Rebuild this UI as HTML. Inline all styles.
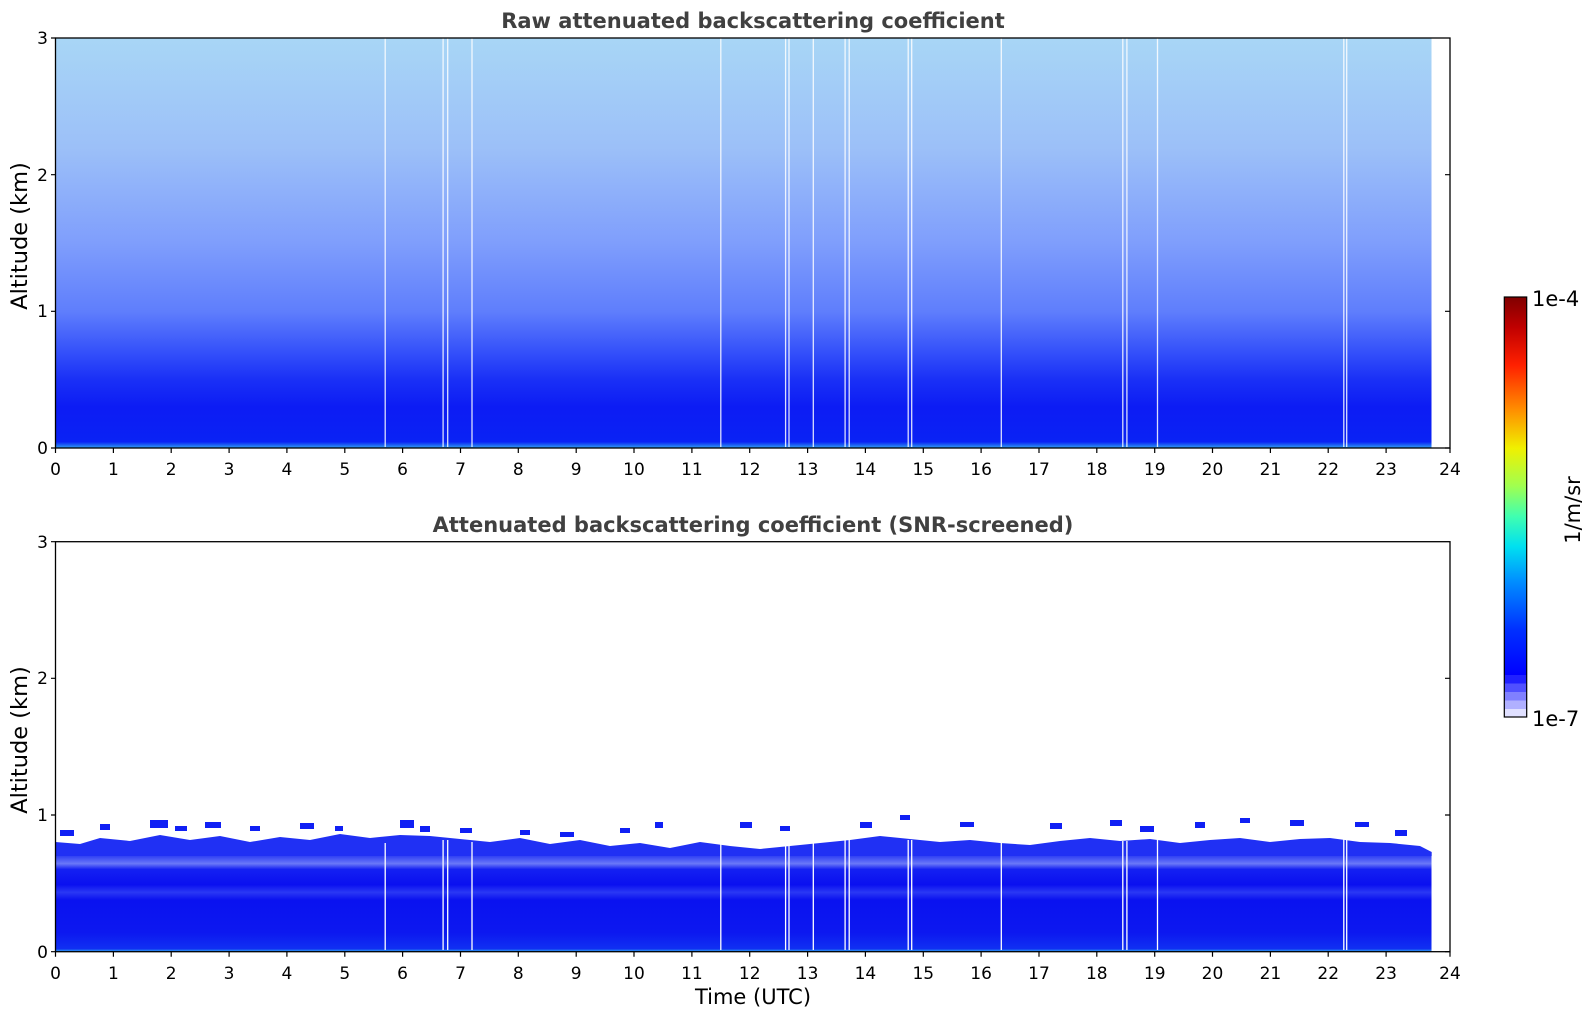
<!DOCTYPE html>
<html><head><meta charset="utf-8"><style>
html,body{margin:0;padding:0;background:#fff;}
svg{display:block;font-family:"DejaVu Sans","Liberation Sans",sans-serif;}
</style></head><body>
<svg width="1595" height="1020" viewBox="0 0 1595 1020" xmlns="http://www.w3.org/2000/svg">
<defs>
<linearGradient id="topg" x1="0" y1="0" x2="0" y2="1">
<stop offset="0" stop-color="#a8d6f6"/>
<stop offset="0.267" stop-color="#9cc0f8"/>
<stop offset="0.5" stop-color="#7f9efc"/>
<stop offset="0.667" stop-color="#5f7efc"/>
<stop offset="0.767" stop-color="#3450fa"/>
<stop offset="0.833" stop-color="#1a30f6"/>
<stop offset="0.9" stop-color="#0c1cf4"/>
<stop offset="0.985" stop-color="#0a22f4"/>
<stop offset="1" stop-color="#30a0f0"/>
</linearGradient>
<linearGradient id="botg" x1="0" y1="0" x2="0" y2="1">
<stop offset="0" stop-color="#3040f4"/>
<stop offset="0.08" stop-color="#6a78f8"/>
<stop offset="0.14" stop-color="#1420f2"/>
<stop offset="0.3" stop-color="#0a10f0"/>
<stop offset="0.38" stop-color="#2a38f4"/>
<stop offset="0.46" stop-color="#0a12f0"/>
<stop offset="0.8" stop-color="#0c18f0"/>
<stop offset="0.97" stop-color="#1030f2"/>
<stop offset="1" stop-color="#30b0f0"/>
</linearGradient>
<linearGradient id="cbar" x1="0" y1="1" x2="0" y2="0">
<stop offset="0" stop-color="#0000ff"/>
<stop offset="0.12" stop-color="#0030ff"/>
<stop offset="0.25" stop-color="#0090ff"/>
<stop offset="0.34" stop-color="#00e0f0"/>
<stop offset="0.42" stop-color="#40ffb0"/>
<stop offset="0.5" stop-color="#a0ff50"/>
<stop offset="0.6" stop-color="#f0f000"/>
<stop offset="0.7" stop-color="#ff9000"/>
<stop offset="0.82" stop-color="#ff2000"/>
<stop offset="0.92" stop-color="#c00000"/>
<stop offset="1" stop-color="#800000"/>
</linearGradient>
</defs>

<text x="753" y="28" font-size="21" font-weight="bold" fill="#404040" text-anchor="middle">Raw attenuated backscattering coefficient</text>
<text x="753" y="532" font-size="21" font-weight="bold" fill="#404040" text-anchor="middle">Attenuated backscattering coefficient (SNR-screened)</text>

<rect x="55.5" y="38" width="1376" height="410" fill="url(#topg)"/>
<g stroke="#fff" stroke-width="1.3" opacity="0.85">
<line x1="385.2" y1="38" x2="385.2" y2="447"/>
<line x1="443.1" y1="38" x2="443.1" y2="447"/>
<line x1="447.7" y1="38" x2="447.7" y2="447"/>
<line x1="472" y1="38" x2="472" y2="447"/>
<line x1="720.8" y1="38" x2="720.8" y2="447"/>
<line x1="785.6" y1="38" x2="785.6" y2="447"/>
<line x1="789" y1="38" x2="789" y2="447"/>
<line x1="813.3" y1="38" x2="813.3" y2="447"/>
<line x1="845.1" y1="38" x2="845.1" y2="447"/>
<line x1="849.2" y1="38" x2="849.2" y2="447"/>
<line x1="908.2" y1="38" x2="908.2" y2="447"/>
<line x1="911.7" y1="38" x2="911.7" y2="447"/>
<line x1="1001.3" y1="38" x2="1001.3" y2="447"/>
<line x1="1122.8" y1="38" x2="1122.8" y2="447"/>
<line x1="1126.9" y1="38" x2="1126.9" y2="447"/>
<line x1="1157.5" y1="38" x2="1157.5" y2="447"/>
<line x1="1343.8" y1="38" x2="1343.8" y2="447"/>
<line x1="1346.7" y1="38" x2="1346.7" y2="447"/>
</g>

<g>
<rect x="55.5" y="856" width="1376" height="95.7" fill="url(#botg)"/>
<path fill="#2030f4" d="M55.5 856 L55.5 842 L80 844 L100 838 L130 841 L160 835 L190 840 L220 836 L250 842 L280 837 L310 840 L340 834 L370 838 L400 835 L430 836 L460 839 L490 842 L520 838 L550 844 L580 840 L610 846 L640 843 L670 848 L700 842 L730 846 L760 849 L790 846 L820 843 L850 840 L880 836 L910 839 L940 842 L970 840 L1000 843 L1030 845 L1060 841 L1090 838 L1120 841 L1150 839 L1180 843 L1210 840 L1240 838 L1270 842 L1300 839 L1330 838 L1360 842 L1390 843 L1420 846 L1431.7 852 L1431.7 856 Z"/>
<g fill="#1020f4">
<rect x="60" y="830" width="14" height="6"/><rect x="100" y="824" width="10" height="6"/><rect x="150" y="820" width="18" height="8"/><rect x="175" y="826" width="12" height="5"/><rect x="205" y="822" width="16" height="6"/><rect x="250" y="826" width="10" height="5"/><rect x="300" y="823" width="14" height="6"/><rect x="335" y="826" width="8" height="5"/><rect x="400" y="820" width="14" height="8"/><rect x="420" y="826" width="10" height="6"/><rect x="460" y="828" width="12" height="5"/><rect x="520" y="830" width="10" height="5"/><rect x="560" y="832" width="14" height="5"/><rect x="620" y="828" width="10" height="5"/><rect x="655" y="822" width="8" height="6"/><rect x="740" y="822" width="12" height="6"/><rect x="780" y="826" width="10" height="5"/><rect x="860" y="822" width="12" height="6"/><rect x="900" y="815" width="10" height="5"/><rect x="960" y="822" width="14" height="5"/><rect x="1050" y="823" width="12" height="6"/><rect x="1110" y="820" width="12" height="6"/><rect x="1140" y="826" width="14" height="6"/><rect x="1195" y="822" width="10" height="6"/><rect x="1240" y="818" width="10" height="5"/><rect x="1290" y="820" width="14" height="6"/><rect x="1355" y="822" width="14" height="5"/><rect x="1395" y="830" width="12" height="6"/>
</g>
</g>
<g stroke="#fff" stroke-width="1.3">
<line x1="385.2" y1="843" x2="385.2" y2="950"/>
<line x1="443.1" y1="840" x2="443.1" y2="950"/>
<line x1="447.7" y1="840" x2="447.7" y2="950"/>
<line x1="472" y1="842" x2="472" y2="950"/>
<line x1="720.8" y1="842" x2="720.8" y2="950"/>
<line x1="785.6" y1="845" x2="785.6" y2="950"/>
<line x1="789" y1="845" x2="789" y2="950"/>
<line x1="813.3" y1="843" x2="813.3" y2="950"/>
<line x1="845.1" y1="840" x2="845.1" y2="950"/>
<line x1="849.2" y1="840" x2="849.2" y2="950"/>
<line x1="908.2" y1="840" x2="908.2" y2="950"/>
<line x1="911.7" y1="840" x2="911.7" y2="950"/>
<line x1="1001.3" y1="843" x2="1001.3" y2="950"/>
<line x1="1122.8" y1="841" x2="1122.8" y2="950"/>
<line x1="1126.9" y1="841" x2="1126.9" y2="950"/>
<line x1="1157.5" y1="839" x2="1157.5" y2="950"/>
<line x1="1343.8" y1="838" x2="1343.8" y2="950"/>
<line x1="1346.7" y1="838" x2="1346.7" y2="950"/>
</g>

<g fill="none" stroke="#000" stroke-width="1.3">
<rect x="55.5" y="38" width="1394.5" height="410"/>
<rect x="55.5" y="541.7" width="1394.5" height="410"/>
</g>

<g stroke="#000" stroke-width="1.2">
<path d="M51 448H55.5 M51 311.3H55.5 M51 174.7H55.5 M51 38H55.5 M1450 448H1445 M1450 311.3H1445 M1450 174.7H1445"/>
<path d="M51 951.7H55.5 M51 815H55.5 M51 678.3H55.5 M51 541.7H55.5 M1450 951.7H1445 M1450 815H1445 M1450 678.3H1445"/>
<path d="M55.5 448v5 M113.4 448v5 M171.2 448v5 M229.1 448v5 M286.9 448v5 M344.8 448v5 M402.6 448v5 M460.5 448v5 M518.3 448v5 M576.2 448v5 M634 448v5 M691.9 448v5 M749.7 448v5 M807.6 448v5 M865.4 448v5 M923.3 448v5 M981.1 448v5 M1039 448v5 M1096.8 448v5 M1154.7 448v5 M1212.5 448v5 M1270.4 448v5 M1328.2 448v5 M1386.1 448v5 M1450 448v5"/>
<path d="M55.5 951.7v5 M113.4 951.7v5 M171.2 951.7v5 M229.1 951.7v5 M286.9 951.7v5 M344.8 951.7v5 M402.6 951.7v5 M460.5 951.7v5 M518.3 951.7v5 M576.2 951.7v5 M634 951.7v5 M691.9 951.7v5 M749.7 951.7v5 M807.6 951.7v5 M865.4 951.7v5 M923.3 951.7v5 M981.1 951.7v5 M1039 951.7v5 M1096.8 951.7v5 M1154.7 951.7v5 M1212.5 951.7v5 M1270.4 951.7v5 M1328.2 951.7v5 M1386.1 951.7v5 M1450 951.7v5"/>
</g>

<g font-size="17" text-anchor="end" fill="#000">
<text x="48" y="454">0</text><text x="48" y="317">1</text><text x="48" y="181">2</text><text x="48" y="44">3</text>
<text x="48" y="958">0</text><text x="48" y="821">1</text><text x="48" y="684">2</text><text x="48" y="548">3</text>
</g>
<g font-size="17" text-anchor="middle" fill="#000">
<text x="55.5" y="475">0</text><text x="113.4" y="475">1</text><text x="171.2" y="475">2</text><text x="229.1" y="475">3</text><text x="286.9" y="475">4</text><text x="344.8" y="475">5</text><text x="402.6" y="475">6</text><text x="460.5" y="475">7</text><text x="518.3" y="475">8</text><text x="576.2" y="475">9</text><text x="634" y="475">10</text><text x="691.9" y="475">11</text><text x="749.7" y="475">12</text><text x="807.6" y="475">13</text><text x="865.4" y="475">14</text><text x="923.3" y="475">15</text><text x="981.1" y="475">16</text><text x="1039" y="475">17</text><text x="1096.8" y="475">18</text><text x="1154.7" y="475">19</text><text x="1212.5" y="475">20</text><text x="1270.4" y="475">21</text><text x="1328.2" y="475">22</text><text x="1386.1" y="475">23</text><text x="1450" y="475">24</text>
<text x="55.5" y="979">0</text><text x="113.4" y="979">1</text><text x="171.2" y="979">2</text><text x="229.1" y="979">3</text><text x="286.9" y="979">4</text><text x="344.8" y="979">5</text><text x="402.6" y="979">6</text><text x="460.5" y="979">7</text><text x="518.3" y="979">8</text><text x="576.2" y="979">9</text><text x="634" y="979">10</text><text x="691.9" y="979">11</text><text x="749.7" y="979">12</text><text x="807.6" y="979">13</text><text x="865.4" y="979">14</text><text x="923.3" y="979">15</text><text x="981.1" y="979">16</text><text x="1039" y="979">17</text><text x="1096.8" y="979">18</text><text x="1154.7" y="979">19</text><text x="1212.5" y="979">20</text><text x="1270.4" y="979">21</text><text x="1328.2" y="979">22</text><text x="1386.1" y="979">23</text><text x="1450" y="979">24</text>
</g>

<text x="753" y="1004" font-size="21" text-anchor="middle" fill="#000">Time (UTC)</text>
<text transform="translate(27 236) rotate(-90)" font-size="22.5" text-anchor="middle" fill="#000">Altitude (km)</text>
<text transform="translate(27 740) rotate(-90)" font-size="22.5" text-anchor="middle" fill="#000">Altitude (km)</text>

<rect x="1504.3" y="297" width="22.4" height="378" fill="url(#cbar)"/>
<rect x="1504.3" y="675" width="22.4" height="8.5" fill="#2020ff"/>
<rect x="1504.3" y="683.5" width="22.4" height="8.5" fill="#5050ff"/>
<rect x="1504.3" y="692" width="22.4" height="8.5" fill="#8080ff"/>
<rect x="1504.3" y="700.5" width="22.4" height="8.5" fill="#b0b0ff"/>
<rect x="1504.3" y="709" width="22.4" height="8" fill="#e0e0ff"/>
<rect x="1504.3" y="297" width="22.4" height="420" fill="none" stroke="#000" stroke-width="1.2"/>
<text x="1532" y="306" font-size="21" fill="#000">1e-4</text>
<text x="1532" y="726" font-size="21" fill="#000">1e-7</text>
<text transform="translate(1580 510) rotate(-90)" font-size="21" text-anchor="middle" fill="#000">1/m/sr</text>
</svg>
</body></html>
